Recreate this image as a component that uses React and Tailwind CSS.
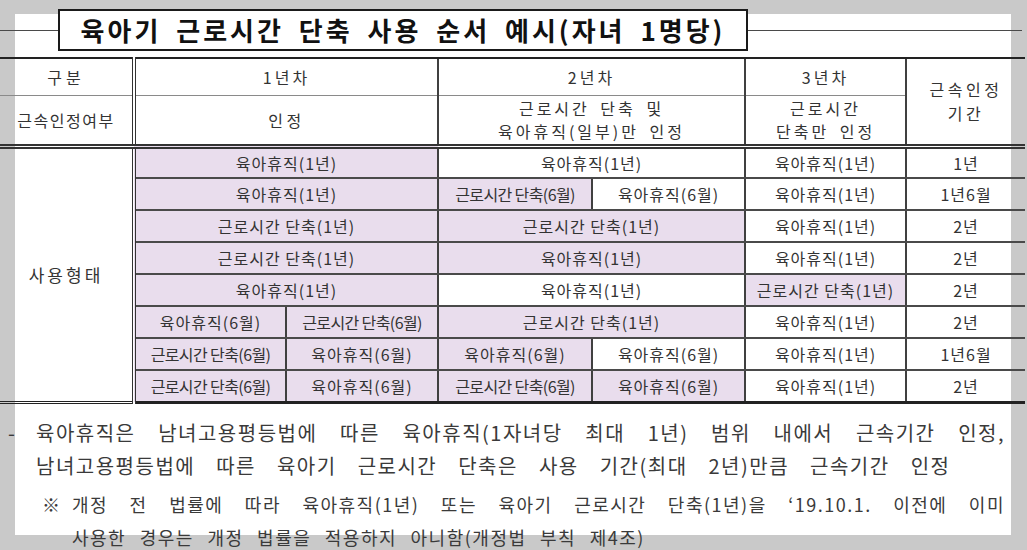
import React from "react";

const body = [
  [["육아휴직(1년)", 2, 1], ["육아휴직(1년)", 2, 0], ["육아휴직(1년)", 1, 0], ["1년", 1, 0]],
  [["육아휴직(1년)", 2, 1], ["근로시간 단축(6월)", 1, 1], ["육아휴직(6월)", 1, 0], ["육아휴직(1년)", 1, 0], ["1년6월", 1, 0]],
  [["근로시간 단축(1년)", 2, 1], ["근로시간 단축(1년)", 2, 1], ["육아휴직(1년)", 1, 0], ["2년", 1, 0]],
  [["근로시간 단축(1년)", 2, 1], ["육아휴직(1년)", 2, 1], ["육아휴직(1년)", 1, 0], ["2년", 1, 0]],
  [["육아휴직(1년)", 2, 1], ["육아휴직(1년)", 2, 0], ["근로시간 단축(1년)", 1, 1], ["2년", 1, 0]],
  [["육아휴직(6월)", 1, 1], ["근로시간 단축(6월)", 1, 1], ["근로시간 단축(1년)", 2, 1], ["육아휴직(1년)", 1, 0], ["2년", 1, 0]],
  [["근로시간 단축(6월)", 1, 1], ["육아휴직(6월)", 1, 1], ["육아휴직(6월)", 1, 1], ["육아휴직(6월)", 1, 0], ["육아휴직(1년)", 1, 0], ["1년6월", 1, 0]],
  [["근로시간 단축(6월)", 1, 1], ["육아휴직(6월)", 1, 1], ["근로시간 단축(6월)", 1, 1], ["육아휴직(6월)", 1, 1], ["육아휴직(1년)", 1, 0], ["2년", 1, 0]],
];

function Cell({ text, span, purple, last }) {
  const narrow = span === 1 && text.startsWith("근로시간 단축(6월)");
  return (
    <td
      colSpan={span}
      className={
        "p-0 text-center align-middle whitespace-nowrap border-l-2 border-l-[#404040] " +
        (last ? "border-b-[3px] border-b-[#222] " : "border-b-2 border-b-[#4a4a4a] ") +
        (purple ? "bg-[#e9dded] " : "") +
        (narrow ? "tracking-[-0.6px]" : "tracking-[1px]")
      }
    >
      {text}
    </td>
  );
}

export default function App() {
  return (
    <div className="relative w-[1027px] h-[550px] overflow-hidden bg-[#c9c9c9] font-['Noto_Sans_CJK_KR','Noto_Sans',sans-serif]">
      <div className="absolute left-[15px] top-[14px] w-[996px] h-[521px] bg-white" />
      <div className="relative">
        {/* title */}
        <div className="flex items-center w-[1022px] pt-[9px]">
          <div className="w-[58px] h-px bg-[#4a4a4a]" />
          <div className="w-[690px] h-[42px] border-2 border-[#1a1a1a] bg-white flex items-center justify-center text-[26px] font-bold text-[#111] tracking-[3px] [word-spacing:6px] leading-none">
            육아기 근로시간 단축 사용 순서 예시(자녀 1명당)
          </div>
          <div className="flex-1 h-px bg-[#4a4a4a]" />
        </div>

        {/* table */}
        <table className="mt-[6px] w-[1025px] table-fixed border-collapse text-[16px] leading-[22px] text-[#333]">
          <colgroup>
            <col className="w-[134px]" />
            <col className="w-[152px]" />
            <col className="w-[152px]" />
            <col className="w-[154px]" />
            <col className="w-[153px]" />
            <col className="w-[161px]" />
            <col className="w-[119px]" />
          </colgroup>
          <tbody>
            <tr className="h-[37px]">
              <td className="p-0 text-center border-t-2 border-t-[#222] border-b border-b-[#8a8a8a] border-r-4 border-r-[#333] border-double tracking-[4px]">
                구분
              </td>
              <td colSpan={2} className="p-0 text-center border-t-2 border-t-[#222] border-b border-b-[#8a8a8a] border-l-2 border-l-[#404040] tracking-[3px]">
                1년차
              </td>
              <td colSpan={2} className="p-0 text-center border-t-2 border-t-[#222] border-b border-b-[#8a8a8a] border-l-2 border-l-[#404040] tracking-[3px]">
                2년차
              </td>
              <td className="p-0 text-center border-t-2 border-t-[#222] border-b border-b-[#8a8a8a] border-l-2 border-l-[#404040] tracking-[3px]">
                3년차
              </td>
              <td rowSpan={2} className="p-0 text-center border-t-2 border-t-[#222] border-b-[5px] border-b-[#333] border-double border-l-2 border-l-[#404040] tracking-[3.5px] leading-[24px]">
                근속인정
                <br />
                기간
              </td>
            </tr>
            <tr className="h-[51px]">
              <td className="p-0 text-center border-b-[5px] border-b-[#333] border-r-4 border-r-[#333] border-double tracking-[1.5px]">
                근속인정여부
              </td>
              <td colSpan={2} className="p-0 text-center border-b-[5px] border-b-[#333] border-double border-l-2 border-l-[#404040] tracking-[3.5px]">
                인정
              </td>
              <td colSpan={2} className="p-0 text-center border-b-[5px] border-b-[#333] border-double border-l-2 border-l-[#404040] tracking-[3px] leading-[23px] [word-spacing:4px]">
                근로시간 단축 및
                <br />
                육아휴직(일부)만 인정
              </td>
              <td className="p-0 text-center border-b-[5px] border-b-[#333] border-double border-l-2 border-l-[#404040] tracking-[3px] leading-[23px] [word-spacing:4px]">
                근로시간
                <br />
                단축만 인정
              </td>
            </tr>
            {body.map((row, i) => (
              <tr key={i} className="h-[32px]">
                {i === 0 && (
                  <td rowSpan={8} className="p-0 text-center align-middle text-[17px] border-b-[3px] border-b-[#222] border-r-4 border-r-[#333] border-double tracking-[3px]">
                    사용형태
                  </td>
                )}
                {row.map(([t, s, p], j) => (
                  <Cell key={j} text={t} span={s} purple={p} last={i === 7} />
                ))}
              </tr>
            ))}
          </tbody>
        </table>

        {/* notes */}
        <div className="w-[1005px] pt-[12px] text-[#3a3a3a]">
          <div className="flex text-[20px] leading-[33px] tracking-[1.5px]">
            <span className="w-[36px] pl-[8px] shrink-0">-</span>
            <span className="flex-1 text-justify [text-align-last:justify]">
              육아휴직은 남녀고용평등법에 따른 육아휴직(1자녀당 최대 1년) 범위 내에서 근속기간 인정,
            </span>
          </div>
          <div className="pl-[36px] text-[20px] leading-[33px] tracking-[1.5px] [word-spacing:15px] whitespace-nowrap">
            남녀고용평등법에 따른 육아기 근로시간 단축은 사용 기간(최대 2년)만큼 근속기간 인정
          </div>
          <div className="flex mt-[6px] text-[18px] leading-[33px] tracking-[1.5px]">
            <span className="w-[72px] pl-[42px] shrink-0">※</span>
            <span className="flex-1 text-justify [text-align-last:justify]">
              개정 전 법률에 따라 육아휴직(1년) 또는 육아기 근로시간 단축(1년)을 ‘19.10.1. 이전에 이미
            </span>
          </div>
          <div className="pl-[72px] text-[18px] leading-[33px] tracking-[1.5px] [word-spacing:8px] whitespace-nowrap">
            사용한 경우는 개정 법률을 적용하지 아니함(개정법 부칙 제4조)
          </div>
        </div>
      </div>
    </div>
  );
}
